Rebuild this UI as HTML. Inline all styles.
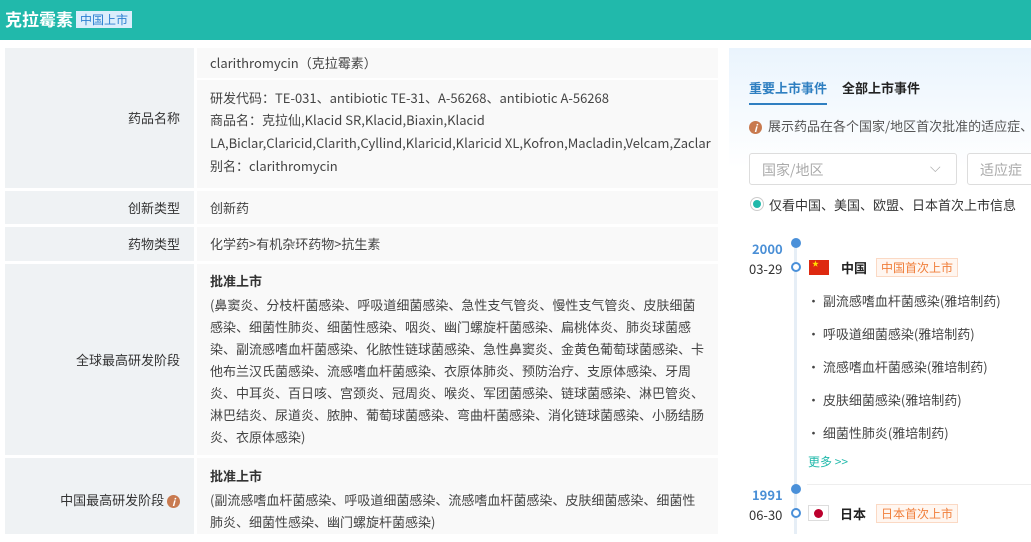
<!DOCTYPE html>
<html><head><meta charset="utf-8"><style>
*{margin:0;padding:0;box-sizing:border-box}
body{width:1031px;height:534px;overflow:hidden;background:#fff;font-family:"Noto Sans CJK SC","Liberation Sans",sans-serif;font-size:13px;color:#333;position:relative}
.hdr{position:absolute;left:0;top:0;width:1031px;height:40px;background:#21b9ab}
.hdr .t{position:absolute;left:5px;top:7px;font-size:17px;line-height:24px;font-weight:bold;color:#fff}
.hdr .tag{position:absolute;left:76px;top:11px;height:17px;padding:0 4px;background:#dbeefc;color:#2b7fd0;font-size:12px;line-height:17px}
.lbl{position:absolute;left:5px;width:189px;background:#eff2f4;text-align:right;padding-right:14px;color:#333}
.val{position:absolute;left:197px;width:521px;background:#f9f9f9;padding-left:13px;color:#444}
.ln{position:absolute;left:210px;white-space:nowrap;color:#444;line-height:22px}
.b{font-weight:bold;color:#333}
.rp{position:absolute;left:729px;top:48px;width:302px;height:486px;background:linear-gradient(#eaf4fd,#fff 120px)}
.abs{position:absolute;white-space:nowrap}
</style></head><body>
<div class="hdr"><div class="t">克拉霉素</div><div class="tag">中国上市</div></div>

<div class="lbl" style="top:48px;height:140px;line-height:140px">药品名称</div>
<div class="val" style="top:48px;height:30px"></div>
<div class="val" style="top:80px;height:108px"></div>
<div class="ln" style="top:52px">clarithromycin（克拉霉素）</div>
<div class="ln" style="top:87px">研发代码：TE-031、antibiotic TE-31、A-56268、antibiotic A-56268</div>
<div class="ln" style="top:109px">商品名：克拉仙,Klacid SR,Klacid,Biaxin,Klacid</div>
<div class="ln" style="top:132px">LA,Biclar,Claricid,Clarith,Cyllind,Klaricid,Klaricid XL,Kofron,Macladin,Velcam,Zaclar</div>
<div class="ln" style="top:155px">别名：clarithromycin</div>

<div class="lbl" style="top:191px;height:33px;line-height:33px">创新类型</div>
<div class="val" style="top:191px;height:33px"></div>
<div class="ln" style="top:197px">创新药</div>

<div class="lbl" style="top:227px;height:34px;line-height:34px">药物类型</div>
<div class="val" style="top:227px;height:34px"></div>
<div class="ln" style="top:233px">化学药&gt;有机杂环药物&gt;抗生素</div>

<div class="lbl" style="top:264px;height:191px;line-height:191px">全球最高研发阶段</div>
<div class="val" style="top:264px;height:191px"></div>
<div class="ln b" style="top:270px">批准上市</div>
<div class="ln" style="top:294px">(鼻窦炎、分枝杆菌感染、呼吸道细菌感染、急性支气管炎、慢性支气管炎、皮肤细菌</div>
<div class="ln" style="top:316px">感染、细菌性肺炎、细菌性感染、咽炎、幽门螺旋杆菌感染、扁桃体炎、肺炎球菌感</div>
<div class="ln" style="top:338px">染、副流感嗜血杆菌感染、化脓性链球菌感染、急性鼻窦炎、金黄色葡萄球菌感染、卡</div>
<div class="ln" style="top:360px">他布兰汉氏菌感染、流感嗜血杆菌感染、衣原体肺炎、预防治疗、支原体感染、牙周</div>
<div class="ln" style="top:382px">炎、中耳炎、百日咳、宫颈炎、冠周炎、喉炎、军团菌感染、链球菌感染、淋巴管炎、</div>
<div class="ln" style="top:404px">淋巴结炎、尿道炎、脓肿、葡萄球菌感染、弯曲杆菌感染、消化链球菌感染、小肠结肠</div>
<div class="ln" style="top:426px">炎、衣原体感染)</div>

<div class="lbl" style="top:458px;height:76px;line-height:84px;padding-right:14px">中国最高研发阶段 <span style="display:inline-block;width:13px;height:13px;border-radius:50%;background:#c87a4f;color:#fff;font-size:10px;line-height:13px;text-align:center;font-style:italic;font-weight:bold;vertical-align:-1px">i</span></div>
<div class="val" style="top:458px;height:76px"></div>
<div class="ln b" style="top:465px">批准上市</div>
<div class="ln" style="top:489px">(副流感嗜血杆菌感染、呼吸道细菌感染、流感嗜血杆菌感染、皮肤细菌感染、细菌性</div>
<div class="ln" style="top:511px">肺炎、细菌性感染、幽门螺旋杆菌感染)</div>

<div class="rp">
 <div class="abs" style="left:20px;top:30px;color:#2f7fc1;font-weight:bold">重要上市事件</div>
 <div style="position:absolute;left:20px;top:55px;width:78px;height:2px;background:#2f7fc1"></div>
 <div class="abs" style="left:113px;top:30px;color:#222;font-weight:bold">全部上市事件</div>
 <div class="abs" style="left:20px;top:68px;color:#555"><span style="display:inline-block;width:13px;height:13px;border-radius:50%;background:#c87a4f;color:#fff;font-size:10px;line-height:13px;text-align:center;font-style:italic;font-weight:bold;vertical-align:-1px;margin-right:6px">i</span>展示药品在各个国家/地区首次批准的适应症、</div>
 <div style="position:absolute;left:20px;top:105px;width:208px;height:32px;border:1px solid #ddd;border-radius:3px;background:#fff"><span class="abs" style="left:12px;top:6px;color:#aaa;font-size:14px">国家/地区</span><span class="abs" style="left:180px;top:3px;color:#aaa;font-size:14px">⌵</span></div>
 <div style="position:absolute;left:238px;top:105px;width:80px;height:32px;border:1px solid #ddd;border-radius:3px;background:#fff"><span class="abs" style="left:12px;top:6px;color:#aaa;font-size:14px">适应症</span></div>
 <div style="position:absolute;left:21px;top:149px;width:14px;height:14px;border-radius:50%;border:1px solid #ccc;background:#fff"><div style="position:absolute;left:2px;top:2px;width:8px;height:8px;border-radius:50%;background:#21b9ab"></div></div>
 <div class="abs" style="left:40px;top:147px;color:#333">仅看中国、美国、欧盟、日本首次上市信息</div>
 <div style="position:absolute;left:65px;top:195px;width:3px;height:291px;background:#e6eef6"></div>
 <div style="position:absolute;left:62px;top:190px;width:10px;height:10px;border-radius:50%;background:#4a90d9"></div>
 <div style="position:absolute;left:62px;top:214px;width:10px;height:10px;border-radius:50%;border:2px solid #4a90d9;background:#fff"></div>
 <div class="abs" style="left:23px;top:191px;color:#4a8fd6;font-weight:bold">2000</div>
 <div class="abs" style="left:20px;top:211px;color:#333">03-29</div>
 <div style="position:absolute;left:80px;top:212px;width:20px;height:15px;background:#de2910;color:#ffde00;font-size:7px;line-height:9px;padding-left:3px">★</div>
 <div class="abs" style="left:112px;top:210px;font-weight:bold;color:#222">中国</div>
 <div class="abs" style="left:147px;top:210px;height:19px;padding:0 4px;border:1px solid #fbd9c4;background:#fff6f0;color:#f07e3a;font-size:12px;line-height:17px">中国首次上市</div>
 <div class="abs" style="left:78px;top:236px;color:#444;line-height:33px">• 副流感嗜血杆菌感染(雅培制药)<br>• 呼吸道细菌感染(雅培制药)<br>• 流感嗜血杆菌感染(雅培制药)<br>• 皮肤细菌感染(雅培制药)<br>• 细菌性肺炎(雅培制药)</div>
 <div class="abs" style="left:79px;top:405px;color:#21b9ab;font-size:12px">更多 &gt;&gt;</div>
 <div style="position:absolute;left:78px;top:436px;width:224px;height:1px;background:#eee"></div>
 <div style="position:absolute;left:62px;top:436px;width:10px;height:10px;border-radius:50%;background:#4a90d9"></div>
 <div style="position:absolute;left:62px;top:460px;width:10px;height:10px;border-radius:50%;border:2px solid #4a90d9;background:#fff"></div>
 <div class="abs" style="left:23px;top:437px;color:#4a8fd6;font-weight:bold">1991</div>
 <div class="abs" style="left:20px;top:457px;color:#333">06-30</div>
 <div style="position:absolute;left:79px;top:457px;width:21px;height:16px;border:1px solid #ddd;background:#fff"><div style="position:absolute;left:5px;top:3px;width:9px;height:9px;border-radius:50%;background:#bc002d"></div></div>
 <div class="abs" style="left:111px;top:456px;font-weight:bold;color:#222">日本</div>
 <div class="abs" style="left:147px;top:456px;height:19px;padding:0 4px;border:1px solid #fbd9c4;background:#fff6f0;color:#f07e3a;font-size:12px;line-height:17px">日本首次上市</div>
</div>
</body></html>
